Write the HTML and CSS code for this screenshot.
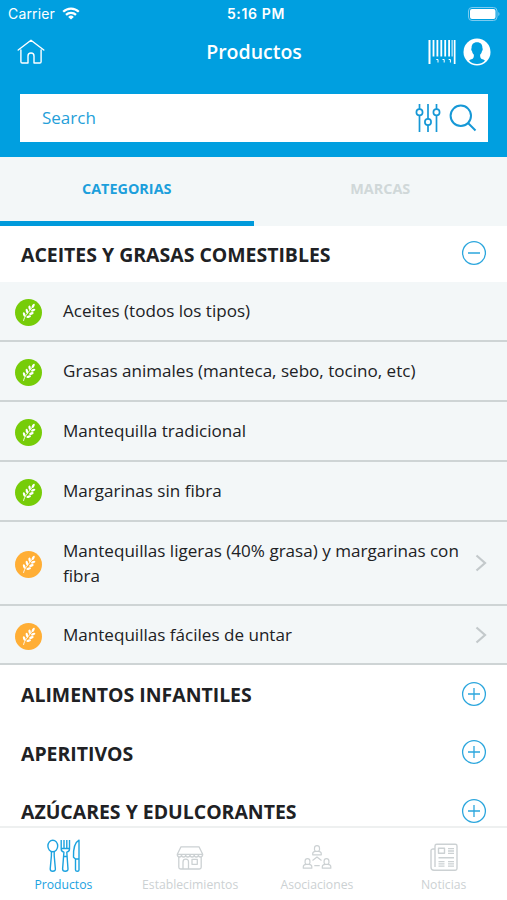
FILE: index.html
```html
<!DOCTYPE html>
<html lang="es">
<head>
    <meta charset="utf-8">
    <title>Productos</title>
    <link rel="stylesheet" href="styles.css">
</head>
<body>
    <!-- Shared icons -->
    <svg class="defs">
        <symbol id="wheat" viewBox="0 0 27 27">
            <circle cx="13.5" cy="13.5" r="13.5" fill="currentColor"/>
            <path d="M8.600 21.500C9.400 17 13 14 17.500 8" fill="none" stroke="#fff" stroke-width="0.900" stroke-linecap="round"/>
            <g fill="#fff">
                <ellipse cx="18.2" cy="6.8" rx="1.2" ry="2.3" transform="rotate(30 18.2 6.8)"/>
                <ellipse cx="14.6" cy="8.7" rx="1.2" ry="2.3" transform="rotate(-8 14.6 8.7)"/>
                <ellipse cx="11.9" cy="12.1" rx="1.2" ry="2.4" transform="rotate(-12 11.9 12.1)"/>
                <ellipse cx="9.2" cy="15.4" rx="1.2" ry="2.3" transform="rotate(-18 9.2 15.4)"/>
                <ellipse cx="18.2" cy="11.2" rx="1.2" ry="2.3" transform="rotate(68 18.2 11.2)"/>
                <ellipse cx="16.4" cy="14.5" rx="1.2" ry="2.4" transform="rotate(70 16.4 14.5)"/>
                <ellipse cx="13.7" cy="17.7" rx="1.2" ry="2.4" transform="rotate(75 13.7 17.7)"/>
            </g>
        </symbol>
        <symbol id="plus" viewBox="0 0 26 26">
            <path d="M13 7v12M7 13h12M24.4 13a11.4 11.4 0 1 1-22.8 0a11.4 11.4 0 1 1 22.8 0z" fill="none" stroke="currentColor" stroke-width="1.3"/>
        </symbol>
        <symbol id="minus" viewBox="0 0 26 26">
            <path d="M7 13h12M24.4 13a11.4 11.4 0 1 1-22.8 0a11.4 11.4 0 1 1 22.8 0z" fill="none" stroke="currentColor" stroke-width="1.3"/>
        </symbol>
        <symbol id="chevron" viewBox="0 0 12 18">
            <path d="M1.5 1.5L10 9l-8.5 7.5" fill="none" stroke="currentColor" stroke-width="2.2"/>
        </symbol>
    </svg>

    <header class="header">
        <div class="status">
            <div class="carrier">
                <span>Carrier</span>
                <svg width="18" height="13" viewBox="0 0 18 13">
                    <path d="M1.2 4.8a11 11 0 0 1 15.6 0M4 7.9a7.1 7.1 0 0 1 10 0" fill="none" stroke="#fff" stroke-width="2.2"/>
                    <path d="M9 12.5L6.2 9.900a4 4 0 0 1 5.600 0z" fill="#fff"/>
                </svg>
            </div>
            <span class="clock">5:16 PM</span>
            <svg class="battery" width="32" height="14" viewBox="0 0 32 14">
                <rect x="0.5" y="0.5" width="28.5" height="13" rx="3.5" fill="none" stroke="#7ccbf0"/>
                <rect x="2" y="2" width="25.5" height="10" rx="2" fill="#fff"/>
                <path d="M30.3 5v4q1.2-.6 1.2-2t-1.2-2z" fill="#7ccbf0"/>
            </svg>
        </div>
        <div class="navbar">
            <svg width="28" height="26" viewBox="0 0 28 26" fill="none" stroke="#fff" stroke-width="1.4" stroke-linejoin="round" stroke-linecap="round">
                <path d="M1.2 11L14 1.2 26.8 11M3.9 11v11.700q0 1.300 1.300 1.300H11v-7q0-3 3-3t3 3v7h5.800q1.300 0 1.300-1.300V11"/>
            </svg>
            <h1 class="title">Productos</h1>
            <div class="nav-icons">
                <svg width="28" height="24" viewBox="0 0 28 24" fill="#fff">
                    <path d="M.5 0h2v24H.5zM4.600 0h1.800v16.500H4.600zM8.500 0h1.800v16.500H8.500zM12.400 0h1.800v16.500h-1.800zM16.300 0h1.800v16.500h-1.800zM20.200 0H22v16.500h-1.800zM23.600 0h1v16.500h-1zM25.800 0h1.700v24h-1.700z"/>
                    <path d="M8.3 19.500h1.700v3M14.500 19.500h1.700v3M20.700 19.500h1.700v3" fill="none" stroke="#fff" stroke-width="1"/>
                </svg>
                <svg width="28" height="28" viewBox="0 0 28 28">
                    <circle cx="14" cy="14" r="13.500" fill="#fff"/>
                    <path d="M14 4.300c3.700 0 5.600 2.300 5.400 5.700.6.900.4 2.400-.4 3-.3 1.700-1 2.900-1.900 3.700 0 2.600.4 3.900 2.400 4.600 1.400.5 2 .8 2.400 1.400Q18.500 26 14 26t-7.900-3.300c.4-.6 1-.9 2.400-1.400 2-.7 2.400-2 2.400-4.600-.9-.8-1.600-2-1.900-3.700-.8-.6-1-2.100-.4-3C8.400 6.600 10.300 4.300 14 4.300z" fill="#009fe0"/>
                </svg>
            </div>
        </div>
        <div class="search">
            <span class="search-text">Search</span>
            <svg width="26" height="30" viewBox="0 0 26 30" fill="none" stroke="#1698d6" stroke-width="1.700">
                <path d="M4.500 1v5M4.500 12v17M13 1v15M13 22v7M21.500 1v5M21.500 12v17"/>
                <circle cx="4.500" cy="9.200" r="3.100"/>
                <circle cx="13" cy="19" r="3.100"/>
                <circle cx="21.500" cy="9.200" r="3.100"/>
            </svg>
            <svg class="glass" width="28" height="28" viewBox="0 0 28 28" fill="none" stroke="#1698d6" stroke-width="2">
                <circle cx="11.800" cy="11.800" r="10.200"/>
                <path d="M19 19l7.500 7.500"/>
            </svg>
        </div>
    </header>

    <nav class="tabs">
        <div class="tab active">CATEGORIAS</div>
        <div class="tab">MARCAS</div>
    </nav>

    <main class="list">
        <div class="category open">
            <h2>ACEITES Y GRASAS COMESTIBLES</h2>
            <svg class="toggle"><use href="#minus"/></svg>
        </div>
        <div class="item">
            <svg class="badge green"><use href="#wheat"/></svg>
            <p>Aceites (todos los tipos)</p>
        </div>
        <div class="item">
            <svg class="badge green"><use href="#wheat"/></svg>
            <p>Grasas animales (manteca, sebo, tocino, etc)</p>
        </div>
        <div class="item">
            <svg class="badge green"><use href="#wheat"/></svg>
            <p>Mantequilla tradicional</p>
        </div>
        <div class="item">
            <svg class="badge green"><use href="#wheat"/></svg>
            <p>Margarinas sin fibra</p>
        </div>
        <div class="item tall">
            <svg class="badge orange"><use href="#wheat"/></svg>
            <p>Mantequillas ligeras (40% grasa) y margarinas con fibra</p>
            <svg class="chevron"><use href="#chevron"/></svg>
        </div>
        <div class="item">
            <svg class="badge orange"><use href="#wheat"/></svg>
            <p>Mantequillas fáciles de untar</p>
            <svg class="chevron"><use href="#chevron"/></svg>
        </div>
        <div class="category">
            <h2>ALIMENTOS INFANTILES</h2>
            <svg class="toggle"><use href="#plus"/></svg>
        </div>
        <div class="category">
            <h2>APERITIVOS</h2>
            <svg class="toggle"><use href="#plus"/></svg>
        </div>
        <div class="category">
            <h2>AZÚCARES Y EDULCORANTES</h2>
            <svg class="toggle"><use href="#plus"/></svg>
        </div>
    </main>

    <footer class="tabbar">
        <div class="tabbar-item selected">
            <svg width="34" height="34" viewBox="-1 0 34 34" fill="none" stroke="currentColor" stroke-width="1.400" stroke-linejoin="round">
                <ellipse cx="5.800" cy="7" rx="4.900" ry="5.800"/>
                <path d="M4.400 12.700v4L3.200 30q0 2.200 2.600 2.200T8.400 30L7.200 16.700v-4"/>
                <path d="M14.200 1v9q0 2.500 2.700 3.200L15.600 30q0 2.200 2.700 2.200T21 30l-1.200-16.800q2.700-.7 2.700-3.200V1M17 1v8M19.800 1v8M14.200 9.500h8.300M17 17.500h2.700"/>
                <path d="M32 1.200V31q0 1.200-1.700 1.200T28.500 31V20l-2-1.800Q26 4.500 32 1.200zM28.500 20H32"/>
            </svg>
            <span>Productos</span>
        </div>
        <div class="tabbar-item">
            <svg width="28" height="34" viewBox="0 0 28 34" fill="none" stroke="currentColor" stroke-width="1.300" stroke-linejoin="round">
                <path d="M5 7.800h18l3.700 7.500H1.300zM1.300 15.300q0 2.700 2.100 2.700t2.100-2q0 2 2.100 2t2.100-2q0 2 2.100 2t2.200-2q0 2 2.100 2t2.100-2q0 2 2.100 2t2.100-2q0 2 2.100 2t2.200-2.700"/>
                <path d="M2.800 18v10.200q0 1.800 1.800 1.800h18.800q1.800 0 1.800-1.800V18M7 30v-7q0-2.800 2.800-2.800t2.700 2.800v7M16 20.300h5.300v5H16z"/>
            </svg>
            <span>Establecimientos</span>
        </div>
        <div class="tabbar-item">
            <svg width="30" height="34" viewBox="0 0 30 34" fill="none" stroke="currentColor" stroke-width="1.200" stroke-linejoin="round">
                <path d="M12.500 11V9q0-2.400 2.500-2.400T17.500 9v2l-1 1.400h-3zM13.500 12.400q-2.800.4-2.800 2.400v1h8.600v-1q0-2-2.800-2.400"/>
                <path d="M3.100 24v-2q0-2.400 2.400-2.400T7.900 22v2l-1 1.400H4.100zM4.100 25.400q-2.800.4-2.800 2.400v1.400h8.500v-1.400q0-2-2.800-2.400"/>
                <path d="M22.100 24v-2q0-2.400 2.400-2.400t2.400 2.400v2l-1 1.400h-2.800zM23.100 25.400q-2.800.4-2.800 2.400v1.400h8.500v-1.400q0-2-2.800-2.400"/>
                <path d="M10.500 21.500l4.500-3.500 4.500 3.500M12.300 26.600h5.400"/>
            </svg>
            <span>Asociaciones</span>
        </div>
        <div class="tabbar-item">
            <svg width="28" height="34" viewBox="0 0 28 34" fill="none" stroke="currentColor" stroke-width="1.400" stroke-linejoin="round">
                <path d="M5 28V7q0-1.700 1.700-1.700h18.600Q27 5.300 27 7v22.500q0 1.700-1.700 1.700H4q-3 0-3-3V11.500q0-1.800 4-1.800"/>
                <path d="M8.500 9.300h6v5h-6zM18 9.600h6M18 12h6M18 14.400h6M8.500 18.800h15.500M8.500 22.600h6M8.500 24.900h6M8.500 27.100h6M18 22.600h6M18 24.900h6M18 27.100h6"/>
            </svg>
            <span>Noticias</span>
        </div>
    </footer>
</body>
</html>
```

FILE: styles.css
```css
* {
    box-sizing: border-box;
}

body {
    margin: 0;
    height: 900px;
    display: flex;
    flex-direction: column;
    overflow: hidden;
    background: #fff;
    font-family: "Open Sans", sans-serif;
    color: #202124;
}

svg {
    display: block;
    flex-shrink: 0;
}

h1, h2, p {
    margin: 0;
}

.defs {
    display: none;
}

/* Header */
.header {
    flex: none;
    height: 157px;
    background: #009fe0;
    color: #fff;
}

.status {
    display: grid;
    grid-template-columns: 1fr auto 1fr;
    align-items: center;
    height: 27px;
    padding: 0 7px 0 8px;
    font-family: Inter, sans-serif;
    font-size: 14px;
}

.carrier {
    display: flex;
    align-items: center;
    gap: 7px;
    letter-spacing: 0.15px;
}

.clock {
    margin-left: 4px;
    font-weight: 600;
    font-size: 14px;
    letter-spacing: 0.65px;
}

.battery {
    justify-self: end;
}

.navbar {
    display: grid;
    grid-template-columns: 1fr auto 1fr;
    align-items: center;
    height: 50px;
    padding: 0 16px 0 17px;
}

.title {
    font-size: 19.5px;
    font-weight: 600;
    line-height: 26px;
    padding-bottom: 1px;
}

.nav-icons {
    display: flex;
    align-items: center;
    justify-content: flex-end;
    gap: 7px;
}

.search {
    display: flex;
    align-items: center;
    height: 48px;
    margin: 17px 19px 0 20px;
    padding: 0 11px 0 22px;
    background: #fff;
    color: #259fd9;
}

.search-text {
    flex: 1;
    font-size: 17px;
    padding-bottom: 1px;
}

.glass {
    margin-left: 8px;
}

/* Tabs */
.tabs {
    flex: none;
    display: flex;
    height: 69px;
    background: #f3f7f8;
}

.tab {
    flex: 1;
    padding-top: 22px;
    border-bottom: 5px solid transparent;
    text-align: center;
    font-size: 14.4px;
    line-height: 20px;
    font-weight: 700;
    color: #d0d8d9;
}

.tab.active {
    color: #1c9fdc;
    border-color: #009adb;
}

/* Category list */
.list {
    flex: 1;
    min-height: 0;
    overflow: hidden;
}

.category {
    display: flex;
    align-items: center;
    justify-content: space-between;
    height: 58.5px;
    padding: 0 20px 0 21px;
}

.category.open {
    height: 56px;
}

.category h2 {
    font-size: 19.45px;
    font-weight: 700;
}

.toggle {
    width: 26px;
    height: 26px;
    margin-bottom: 2px;
    color: #2ba6dd;
}

.item {
    display: flex;
    align-items: center;
    height: 59.9px;
    padding: 0 20px 0 15px;
    background: #f3f7f8;
    border-bottom: 2px solid #ced4d5;
}

.item.tall {
    height: 84px;
}

.item p {
    flex: 1;
    margin-left: 21px;
    font-size: 17.07px;
    line-height: 25px;
}

.badge {
    width: 27px;
    height: 27px;
    margin-top: 3px;
}

.green {
    color: #76cc08;
}

.orange {
    color: #ffae35;
}

.chevron {
    width: 12px;
    height: 18px;
    color: #c3c9cb;
}

/* Bottom bar */
.tabbar {
    flex: none;
    display: flex;
    height: 74px;
    padding-top: 11px;
    border-top: 2px solid #eef0f0;
    background: #fff;
}

.tabbar-item {
    flex: 1;
    display: flex;
    flex-direction: column;
    align-items: center;
    gap: 3px;
    font-size: 12.2px;
    color: #ccd1d3;
}

.tabbar-item.selected {
    color: #1ba2df;
}
```
